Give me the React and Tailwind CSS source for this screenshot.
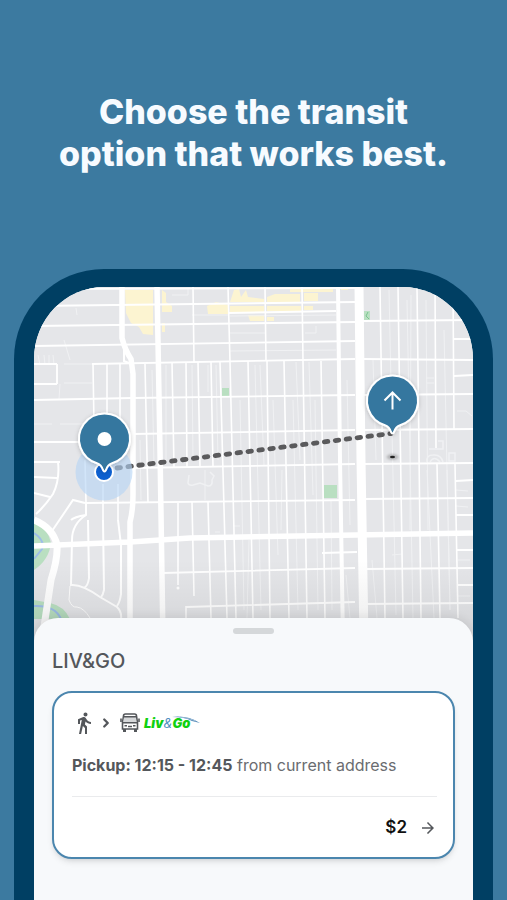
import React from 'react';
import { ChevronRight } from 'lucide-react';
import { MdArrowForward, MdDirectionsWalk } from 'react-icons/md';

// [x at top, y top, x at bottom, y bottom]
const streets = [
    // upper blocks
    [193, 287, 194, 362], [228, 287, 230, 362], [265, 287, 266, 361], [302, 287, 303, 361],
    // left of the second avenue
    [93, 364, 94, 425], [107, 364, 107, 425], [120, 364, 120, 425], [145, 364, 148, 503],
    // centre grid
    [172, 362, 174, 468], [186, 362, 187, 467], [198, 362, 200, 467], [211, 362, 213, 467],
    [220, 362, 227, 618], [230, 362, 236, 618], [248, 361, 253, 618], [267, 361, 270, 618],
    [284, 361, 289, 618], [303, 361, 307, 618], [321, 361, 325, 618],
    [192, 502, 194, 596], [208, 502, 211, 618],
    // right grid
    [380, 287, 385, 618], [398, 287, 403, 618], [417, 287, 421, 618], [435, 287, 436, 448],
    [437, 464, 440, 618], [453, 287, 454, 430], [455, 464, 458, 618],
    [85, 460, 86, 502], [103, 484, 103, 520], [118, 484, 118, 520],
    [178, 503, 178, 585], [186, 606, 186, 618],
];

const crossStreets = [
    [34, 306, 355, 302], [34, 326, 355, 322], [34, 346, 355, 341], [92, 364, 355, 359],
    [34, 289, 355, 288], [228, 313, 336, 311], [34, 400, 133, 398], [133, 398, 355, 395],
    [34, 442, 79, 442], [34, 462, 60, 462], [133, 434, 355, 430], [133, 468, 355, 464],
    [85, 503, 355, 500], [162, 573, 355, 568], [186, 607, 355, 602],
    [363, 321, 473, 320], [363, 359, 473, 360], [363, 395, 473, 394], [363, 430, 473, 429],
    [363, 464, 473, 463], [363, 499, 473, 498], [363, 569, 473, 568], [363, 604, 473, 603],
    [322, 553, 357, 552], [454, 339, 473, 339], [454, 376, 473, 375],
    [456, 481, 473, 480], [456, 515, 473, 515], [457, 550, 473, 550], [457, 585, 473, 585],
    [34, 384, 57, 384], [57, 364, 57, 384], [34, 364, 57, 364],
];

const lanes = [
    [216, 365, 218, 460], [208, 365, 208, 392], [255, 365, 261, 610], [260, 365, 264, 465],
    [273, 400, 278, 555], [293, 400, 298, 610], [296, 362, 300, 460], [309, 362, 313, 495],
    [315, 400, 318, 610], [331, 500, 332, 610], [240, 400, 244, 610], [389, 290, 396, 615],
    [407, 300, 413, 618], [411, 295, 410, 530], [426, 300, 428, 530], [444, 330, 450, 610],
    [427, 470, 434, 618], [447, 470, 450, 610], [372, 560, 377, 618], [373, 360, 376, 460],
    [140, 440, 141, 500], [152, 370, 154, 465], [347, 380, 350, 525], [346, 575, 350, 618],
    [38, 355, 40, 365], [44, 355, 45, 365], [49, 355, 49, 365], [53, 355, 54, 365],
    [64, 340, 70, 360], [60, 384, 59, 399], [76, 308, 77, 315], [166, 365, 166, 460],
    [192, 365, 193, 460], [205, 470, 205, 500], [249, 540, 247, 618], [282, 470, 281, 530],
    [64, 364, 92, 364], [64, 383, 92, 383], [34, 424, 52, 424], [60, 424, 83, 424],
    [230, 333, 265, 333], [230, 351, 336, 350], [230, 316, 336, 315], [192, 315, 228, 315],
    [305, 333, 316, 333], [316, 326, 316, 333], [172, 295, 188, 295], [188, 289, 188, 295],
    [426, 378, 434, 378], [427, 383, 434, 383], [457, 411, 466, 411], [466, 411, 472, 416],
    [456, 490, 468, 491], [456, 506, 468, 507], [458, 560, 470, 560], [458, 596, 470, 596],
    [392, 555, 402, 554], [234, 526, 240, 526], [215, 532, 220, 532],
];

const toPath = (lines) => lines.map(([x1, y1, x2, y2]) => `M${x1} ${y1}L${x2} ${y2}`).join('');

const Pin = ({ x, y, children }) => (
    <g transform={`translate(${x} ${y})`}>
        <path
            d="M-7 24.5A25.5 25.5 0 1 1 7 24.5C4 25.5 2.5 28 1.5 31Q0 34 -1.5 31C-2.5 28 -4 25.5 -7 24.5Z"
            fill="#36779f"
            stroke="#fff"
            strokeWidth="2"
            filter="url(#pinShadow)"
        />
        {children}
    </g>
);

const RouteMap = () => (
    <svg
        viewBox="34 287 439 353"
        preserveAspectRatio="xMidYMin slice"
        className="block w-full"
        role="img"
        aria-label="Route map"
    >
        <defs>
            <linearGradient id="fade" x1="0" y1="0" x2="0" y2="1">
                <stop offset="0" stopColor="#000" stopOpacity="0" />
                <stop offset="1" stopColor="#000" stopOpacity="0.08" />
            </linearGradient>
            <filter id="pinShadow" x="-30%" y="-30%" width="160%" height="160%">
                <feDropShadow dx="0" dy="1" stdDeviation="2" floodOpacity="0.2" />
            </filter>
            <filter id="soft" x="-100%" y="-100%" width="300%" height="300%">
                <feGaussianBlur stdDeviation="1.2" />
            </filter>
        </defs>
        <rect x="34" y="287" width="439" height="353" fill="#e5e6e9" />

        {/* commercial areas */}
        <g fill="#fcf4d1">
            <path d="M125 290H153V335L143 334L139 327L131 323L126 313Z" />
            <path d="M162 290L166 293V302L172 306V312H162ZM162 323H165V332H162Z" />
            <path d="M230 302L234 290L239 289L241 297L246 290L248 297L264 299V302Z" />
            <path d="M207 306L216 302L228 305V314H208ZM230 306H264V312H230ZM248 315H264V321H250ZM267 317H274V321H267Z" />
            <path d="M267 297L275 294H300V302H267ZM267 306H301V311H267ZM304 293H318V301H304ZM290 288H333V292H290ZM304 306H313V310H304ZM341 287H348V290H341Z" />
        </g>

        {/* parks and creek */}
        <g fill="#b9dfc1">
            <rect x="222" y="388" width="7" height="8" />
            <path d="M364 311L370 311V320H364Z" />
            <path d="M34 522Q48 528 51 543Q49 560 34 570Z" />
            <path d="M34 600L50 603Q64 606 70 619H34Z" />
        </g>
        <path d="M34 533Q45 540 42 549L34 559M34 606Q55 605 61 619" fill="none" stroke="#9dbde8" strokeWidth="2" />
        <path d="M368 312L366 316L369 319" fill="none" stroke="#79c58e" />

        <path d={toPath(lanes)} stroke="#f0f1f3" strokeWidth="1" fill="none" />
        <g fill="none" stroke="#f0f1f3" strokeWidth="1.5">
            <path d="M189 475L188 483Q189 486 193 485L200 483L208 486Q213 486 212 480L214 476L210 472" />
            <path d="M427 462Q426 455 433 455Q441 454 443 462M430 462Q434 455 440 462M449 461V453H455V461ZM438 441H443V449H429" />
        </g>
        <path d={toPath(streets)} stroke="#fff" strokeWidth="1.6" fill="none" />
        <path d={toPath(crossStreets)} stroke="#fff" strokeWidth="1.8" fill="none" />
        <rect x="324" y="485" width="13" height="13" fill="#b9dfc1" />

        {/* residential roads */}
        <g fill="none" stroke="#fff" strokeWidth="2">
            <path d="M58 462Q60 480 53 494Q45 506 36 514M34 477L57 478M34 493L50 497" />
            <path d="M52 531L73 500L85 503M71 520Q74 517 86 515" />
            <path d="M86 503V515Q72 524 72 540L71 585Q82 584 100 597L117 607Q122 612 121 619" />
            <path d="M88 520L89 578Q88 586 84 588M103 520L104 590Q103 595 101 597M118 520L121 545V594Q120 602 117 606" />
        </g>
        <g fill="none" stroke="#fff">
            <path d="M70 586L69 600Q72 608 77 607Q84 608 90 618" strokeWidth="1" />
            <path d="M122 287V338Q125 350 131 359L133 374V495Q133 510 130 522V640" strokeWidth="5.5" />
            <path d="M124 340V361L131 364" strokeWidth="2" />
            <path d="M157 287L160 450L163 640" strokeWidth="5.5" />
            <path d="M34 520Q53 528 57 545Q58 558 51 580L42 640" strokeWidth="7" />
            <path d="M34 546L130 542L190 538L473 533" strokeWidth="5.5" />
            <path d="M338 287L340 460L343 640" strokeWidth="4" />
            <path d="M359 287L361 460L364 640" strokeWidth="9" />
        </g>
        <circle cx="178" cy="588" r="1.5" fill="#fff" />
        <rect x="34" y="560" width="439" height="80" fill="url(#fade)" />

        {/* route */}
        <ellipse cx="392.5" cy="457" rx="6" ry="3" fill="#000" opacity="0.2" filter="url(#soft)" />
        <ellipse cx="392.5" cy="457" rx="2.5" ry="1.2" fill="#222" />
        <path
            d="M117 468L391 433.5"
            fill="none"
            stroke="#5a5a5c"
            strokeWidth="4.8"
            strokeLinecap="round"
            strokeDasharray="3.5 7.5"
        />
        <circle cx="104" cy="472" r="28.5" fill="#b4d3f5" opacity="0.6" />
        <circle cx="104" cy="472" r="9" fill="#0d60d0" stroke="#fff" strokeWidth="2" />
        <Pin x={104.5} y={439}>
            <circle r="7" fill="#fff" />
        </Pin>
        <Pin x={392.5} y={401}>
            <path d="M0 8.5V-8.5M-8 -0.5L0 -8.5L8 -0.5" fill="none" stroke="#fff" strokeWidth="2" />
        </Pin>
    </svg>
);

const BusIcon = () => (
    <svg viewBox="0 0 20 20" className="size-5" fill="none" stroke="#54575b" strokeWidth="1.6" aria-hidden="true">
        <path d="M3.5 3Q3.5 1 5.5 1H14.5Q16.5 1 16.5 3L17.5 9.5V16H2.5V9.5Z" />
        <path d="M4 3.8H16V9.5H3.5Z" fill="#d6d8da" stroke="none" />
        <path d="M3.5 3.8H16.5M2.5 9.8H17.5" />
        <path d="M1 5.5V9M19 5.5V9" />
        <path d="M4.5 16V19M15.5 16V19" strokeWidth="3" />
        <path d="M4.5 12.8H7M13 12.8H15.5M8 13.5H12" strokeWidth="1.5" />
    </svg>
);

const LivGoLogo = () => (
    <span className="relative flex w-14 items-center text-[13px] leading-5 font-black text-[#10d010] italic">
        Liv<span className="font-normal text-[#4f8fc0]">&amp;</span>Go
        <svg viewBox="0 0 30 8" className="absolute top-[3px] right-0 h-2 w-[30px]" aria-hidden="true">
            <path d="M2 1Q17 -1 30 7L22 5Q15 1 2 1Z" fill="#4f86b5" />
            <path d="M10 1Q19 2 26 5" fill="none" stroke="#a9c7df" strokeWidth="0.8" />
        </svg>
    </span>
);

const TripCard = () => (
    <article className="rounded-[20px] border-2 border-[#4b86ae] bg-white pr-4 pl-[18px] pt-[18px] shadow-md shadow-black/10">
        <div className="flex h-6 items-center text-[#54575b]">
            <MdDirectionsWalk size={24} />
            <ChevronRight size={14} strokeWidth={4} className="mr-[7px] ml-[3px]" />
            <BusIcon />
            <span className="ml-1"><LivGoLogo /></span>
        </div>
        <p className="mt-[18px] text-[16px] leading-6 text-[#6a6c70]">
            <span className="font-bold text-[#54575b]">Pickup: 12:15 - 12:45</span> from current address
        </p>
        <div className="mt-[19px] flex h-[61px] items-center justify-end gap-3 border-t border-[#eaebed] pt-[2px]">
            <span className="text-[17px] font-semibold text-[#111]">$2</span>
            <button type="button" aria-label="View trip" className="text-[#54575b]">
                <MdArrowForward size={18} />
            </button>
        </div>
    </article>
);

const App = () => (
    <main className="flex min-h-screen flex-col bg-[#3c7aa0] font-['Inter',sans-serif]">
        <h1 className="pt-[91px] text-center text-[34px] leading-[42px] font-extrabold text-[#f7fbff]">
            Choose the transit
            <br />
            option that works best.
        </h1>
        <div className="mx-[14px] mt-[94px] flex flex-1 flex-col overflow-hidden rounded-t-[90px] border-x-20 border-t-18 border-[#003f63] bg-[#f7f9fb]">
            <RouteMap />
            <section className="relative -mt-[22px] flex-1 rounded-t-[24px] bg-[#f7f9fb] px-[18px] pt-[10px] pb-10 shadow-[0_-2px_10px_rgba(0,0,0,0.08)]">
                <div className="mx-auto h-[6px] w-[41px] rounded-full bg-[#d5d8da]" />
                <h2 className="mt-[15px] mb-[18px] text-[20px] leading-6 font-medium text-[#54575b]">LIV&amp;GO</h2>
                <TripCard />
            </section>
        </div>
    </main>
);

export default App;
